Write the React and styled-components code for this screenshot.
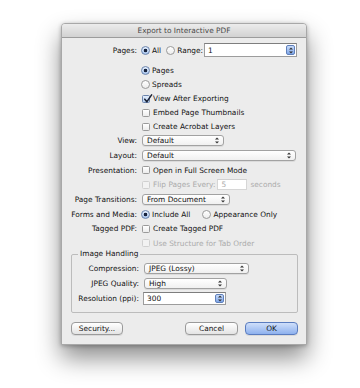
import React from 'react';
import styled, { createGlobalStyle } from 'styled-components';

const GlobalStyle = createGlobalStyle`
  html, body {
    margin: 0;
    padding: 0;
    background: #fff;
  }
  body {
    font-family: "DejaVu Sans", "Liberation Sans", sans-serif;
    font-size: 7.4px;
    color: #121212;
  }
`;

const Arrows = () => (
  <svg width="4" height="7" viewBox="0 0 4 7">
    <path d="M0 2.6 L2 0.4 L4 2.6 Z" fill="#333" />
    <path d="M0 4.4 L2 6.6 L4 4.4 Z" fill="#333" />
  </svg>
);

const Tick = () => (
  <svg width="10" height="10" viewBox="0 0 10 10" style={{ position: 'absolute', left: 0, top: -2 }}>
    <path d="M1.8 5.2 L3.8 7.8 L8.6 0.8" fill="none" stroke="#1b2235" strokeWidth="1.5" strokeLinecap="round" strokeLinejoin="round" />
  </svg>
);

const App = () => {
  return (
    <>
      <GlobalStyle />
      <Page>
        <Window>
          <TitleBar>Export to Interactive PDF</TitleBar>

          <Body>
            <Row $h={14}>
              <Label>Pages:</Label>
              <Controls>
                <Option><Radio $on />All</Option>
                <Option style={{ marginLeft: 5 }}><Radio />Range:</Option>
                <Field $w={93} $h={14} style={{ marginLeft: 1 }}>
                  <span>1</span>
                  <Stepper><Arrows /></Stepper>
                </Field>
              </Controls>
            </Row>

            <Spacer $h={6.5} />

            <Row><span /><Controls><Option><Radio $on />Pages</Option></Controls></Row>
            <Row><span /><Controls><Option><Radio />Spreads</Option></Controls></Row>
            <Row><span /><Controls><Option><Check $on><Tick /></Check>View After Exporting</Option></Controls></Row>
            <Row><span /><Controls><Option><Check />Embed Page Thumbnails</Option></Controls></Row>
            <Row><span /><Controls><Option><Check />Create Acrobat Layers</Option></Controls></Row>

            <Row>
              <Label>View:</Label>
              <Controls><Select $w={82}>Default<Arrows /></Select></Controls>
            </Row>
            <Row $h={15}>
              <Label>Layout:</Label>
              <Controls><Select $w={154}>Default<Arrows /></Select></Controls>
            </Row>
            <Row $h={15}>
              <Label>Presentation:</Label>
              <Controls><Option><Check />Open in Full Screen Mode</Option></Controls>
            </Row>
            <Row>
              <span />
              <Controls>
                <Option $off><Check $off />Flip Pages Every:</Option>
                <Field $w={30} $h={11} $off style={{ marginLeft: 2 }}><span>5</span></Field>
                <Muted style={{ marginLeft: 3 }}>seconds</Muted>
              </Controls>
            </Row>
            <Row $h={15}>
              <Label>Page Transitions:</Label>
              <Controls><Select $w={88}>From Document<Arrows /></Select></Controls>
            </Row>
            <Row $h={15}>
              <Label>Forms and Media:</Label>
              <Controls>
                <Option><Radio $on />Include All</Option>
                <Option style={{ marginLeft: 12 }}><Radio />Appearance Only</Option>
              </Controls>
            </Row>
            <Row>
              <Label>Tagged PDF:</Label>
              <Controls><Option><Check />Create Tagged PDF</Option></Controls>
            </Row>
            <Row $h={15}>
              <span />
              <Controls><Option $off><Check $off />Use Structure for Tab Order</Option></Controls>
            </Row>

            <Group>
              <Legend>Image Handling</Legend>
              <Row $h={15} $label={67}>
                <Label>Compression:</Label>
                <Controls><Select $w={105}>JPEG (Lossy)<Arrows /></Select></Controls>
              </Row>
              <Row $h={15} $label={67}>
                <Label>JPEG Quality:</Label>
                <Controls><Select $w={83}>High<Arrows /></Select></Controls>
              </Row>
              <Row $h={15} $label={67}>
                <Label>Resolution (ppi):</Label>
                <Controls>
                  <Field $w={83} $h={13}>
                    <span>300</span>
                    <Stepper><Arrows /></Stepper>
                  </Field>
                </Controls>
              </Row>
            </Group>

            <ButtonBar>
              <Button $w={52}>Security...</Button>
              <Push />
              <Button $w={53}>Cancel</Button>
              <Button $w={53} $primary>OK</Button>
            </ButtonBar>
          </Body>
        </Window>
      </Page>
    </>
  );
};

export default App;

const Page = styled.div`
  width: 360px;
  height: 388px;
  padding: 23px 0 0 61px;
  box-sizing: border-box;
  background: #fff;
  overflow: hidden;
`;

const Window = styled.div`
  width: 246px;
  box-sizing: border-box;
  background: #ececec;
  border: 1px solid #a8a8a8;
  border-radius: 4px 4px 0 0;
  box-shadow: 0 13px 24px rgba(0, 0, 0, 0.45), 0 1px 4px rgba(0, 0, 0, 0.28);
`;

const TitleBar = styled.div`
  height: 13px;
  line-height: 13px;
  text-align: center;
  color: #4a4a4a;
  border-radius: 3px 3px 0 0;
  background: linear-gradient(#ececec, #d2d2d2);
  border-bottom: 1px solid #9c9c9c;
`;

const Body = styled.div`
  padding: 5px 0 9px 0;
  display: flex;
  flex-direction: column;
`;

const Spacer = styled.div`
  height: ${p => p.$h}px;
`;

const Row = styled.div`
  display: grid;
  grid-template-columns: ${p => p.$label || 75}px 1fr;
  column-gap: 4px;
  align-items: center;
  height: ${p => p.$h || 14}px;
`;

const Label = styled.span`
  text-align: right;
  white-space: nowrap;
`;

const Controls = styled.div`
  display: flex;
  align-items: center;
  white-space: nowrap;
`;

const Option = styled.span`
  display: inline-flex;
  align-items: center;
  gap: 2px;
  color: ${p => (p.$off ? '#ababab' : '#121212')};
`;

const Muted = styled.span`
  color: #ababab;
`;

const Radio = styled.span`
  width: 9px;
  height: 9px;
  box-sizing: border-box;
  border-radius: 50%;
  border: 1px solid ${p => (p.$on ? '#6b84ad' : '#9a9a9a')};
  background: ${p =>
    p.$on
      ? 'radial-gradient(circle, #17233d 0 1.5px, transparent 2.1px), linear-gradient(#e4eefc, #a8c5ee)'
      : 'linear-gradient(#ffffff, #ececec)'};
`;

const Check = styled.span`
  position: relative;
  width: 8px;
  height: 8px;
  margin: 0 1px 0 1px;
  box-sizing: border-box;
  border-radius: 1.5px;
  border: 1px solid ${p => (p.$off ? '#d0d0d0' : p.$on ? '#6b84ad' : '#9a9a9a')};
  background: ${p =>
    p.$off
      ? '#f2f2f2'
      : p.$on
      ? 'linear-gradient(#e4eefc, #b4cdf0)'
      : 'linear-gradient(#ffffff, #ececec)'};
`;

const Select = styled.div`
  width: ${p => p.$w}px;
  height: 11px;
  box-sizing: border-box;
  padding: 0 4px 0 4px;
  margin-left: 1px;
  display: flex;
  align-items: center;
  justify-content: space-between;
  border: 1px solid #a2a2a2;
  border-radius: 3px;
  background: linear-gradient(#ffffff, #f0f0f0);
  box-shadow: 0 1px 0 rgba(0, 0, 0, 0.07);
`;

const Field = styled.div`
  width: ${p => p.$w}px;
  height: ${p => p.$h}px;
  box-sizing: border-box;
  padding: 0 1px 0 3px;
  display: flex;
  align-items: center;
  justify-content: space-between;
  background: #fff;
  color: ${p => (p.$off ? '#ababab' : '#121212')};
  border: 1px solid ${p => (p.$off ? '#d6d6d6' : '#9c9c9c')};
  border-top-color: ${p => (p.$off ? '#d0d0d0' : '#7e7e7e')};
`;

const Stepper = styled.span`
  width: 9px;
  height: calc(100% - 2px);
  box-sizing: border-box;
  display: flex;
  align-items: center;
  justify-content: center;
  border-radius: 2px;
  border: 1px solid #5f80bb;
  background: linear-gradient(#c9dcfa, #7fa6e8);
`;

const Group = styled.fieldset`
  margin: -1.5px 8px 0 9px;
  padding: 1.5px 0 6px 0;
  border: 1px solid #bcbcbc;
  border-radius: 2px;
  min-width: 0;
`;

const Legend = styled.legend`
  margin-left: 6px;
  padding: 0 2px;
  line-height: 10px;
`;

const ButtonBar = styled.div`
  display: flex;
  align-items: center;
  gap: 7px;
  margin-top: 9px;
  padding: 0 8px 0 9px;
`;

const Push = styled.div`
  flex: 1;
`;

const Button = styled.div`
  width: ${p => p.$w}px;
  height: 13px;
  box-sizing: border-box;
  display: flex;
  align-items: center;
  justify-content: center;
  border-radius: 4px;
  border: 1px solid ${p => (p.$primary ? '#5a7cbf' : '#9a9a9a')};
  background: ${p =>
    p.$primary ? 'linear-gradient(#cfdffa, #8eb1ee)' : 'linear-gradient(#ffffff, #e4e4e4)'};
  box-shadow: 0 1px 0 rgba(0, 0, 0, 0.08);
`;
